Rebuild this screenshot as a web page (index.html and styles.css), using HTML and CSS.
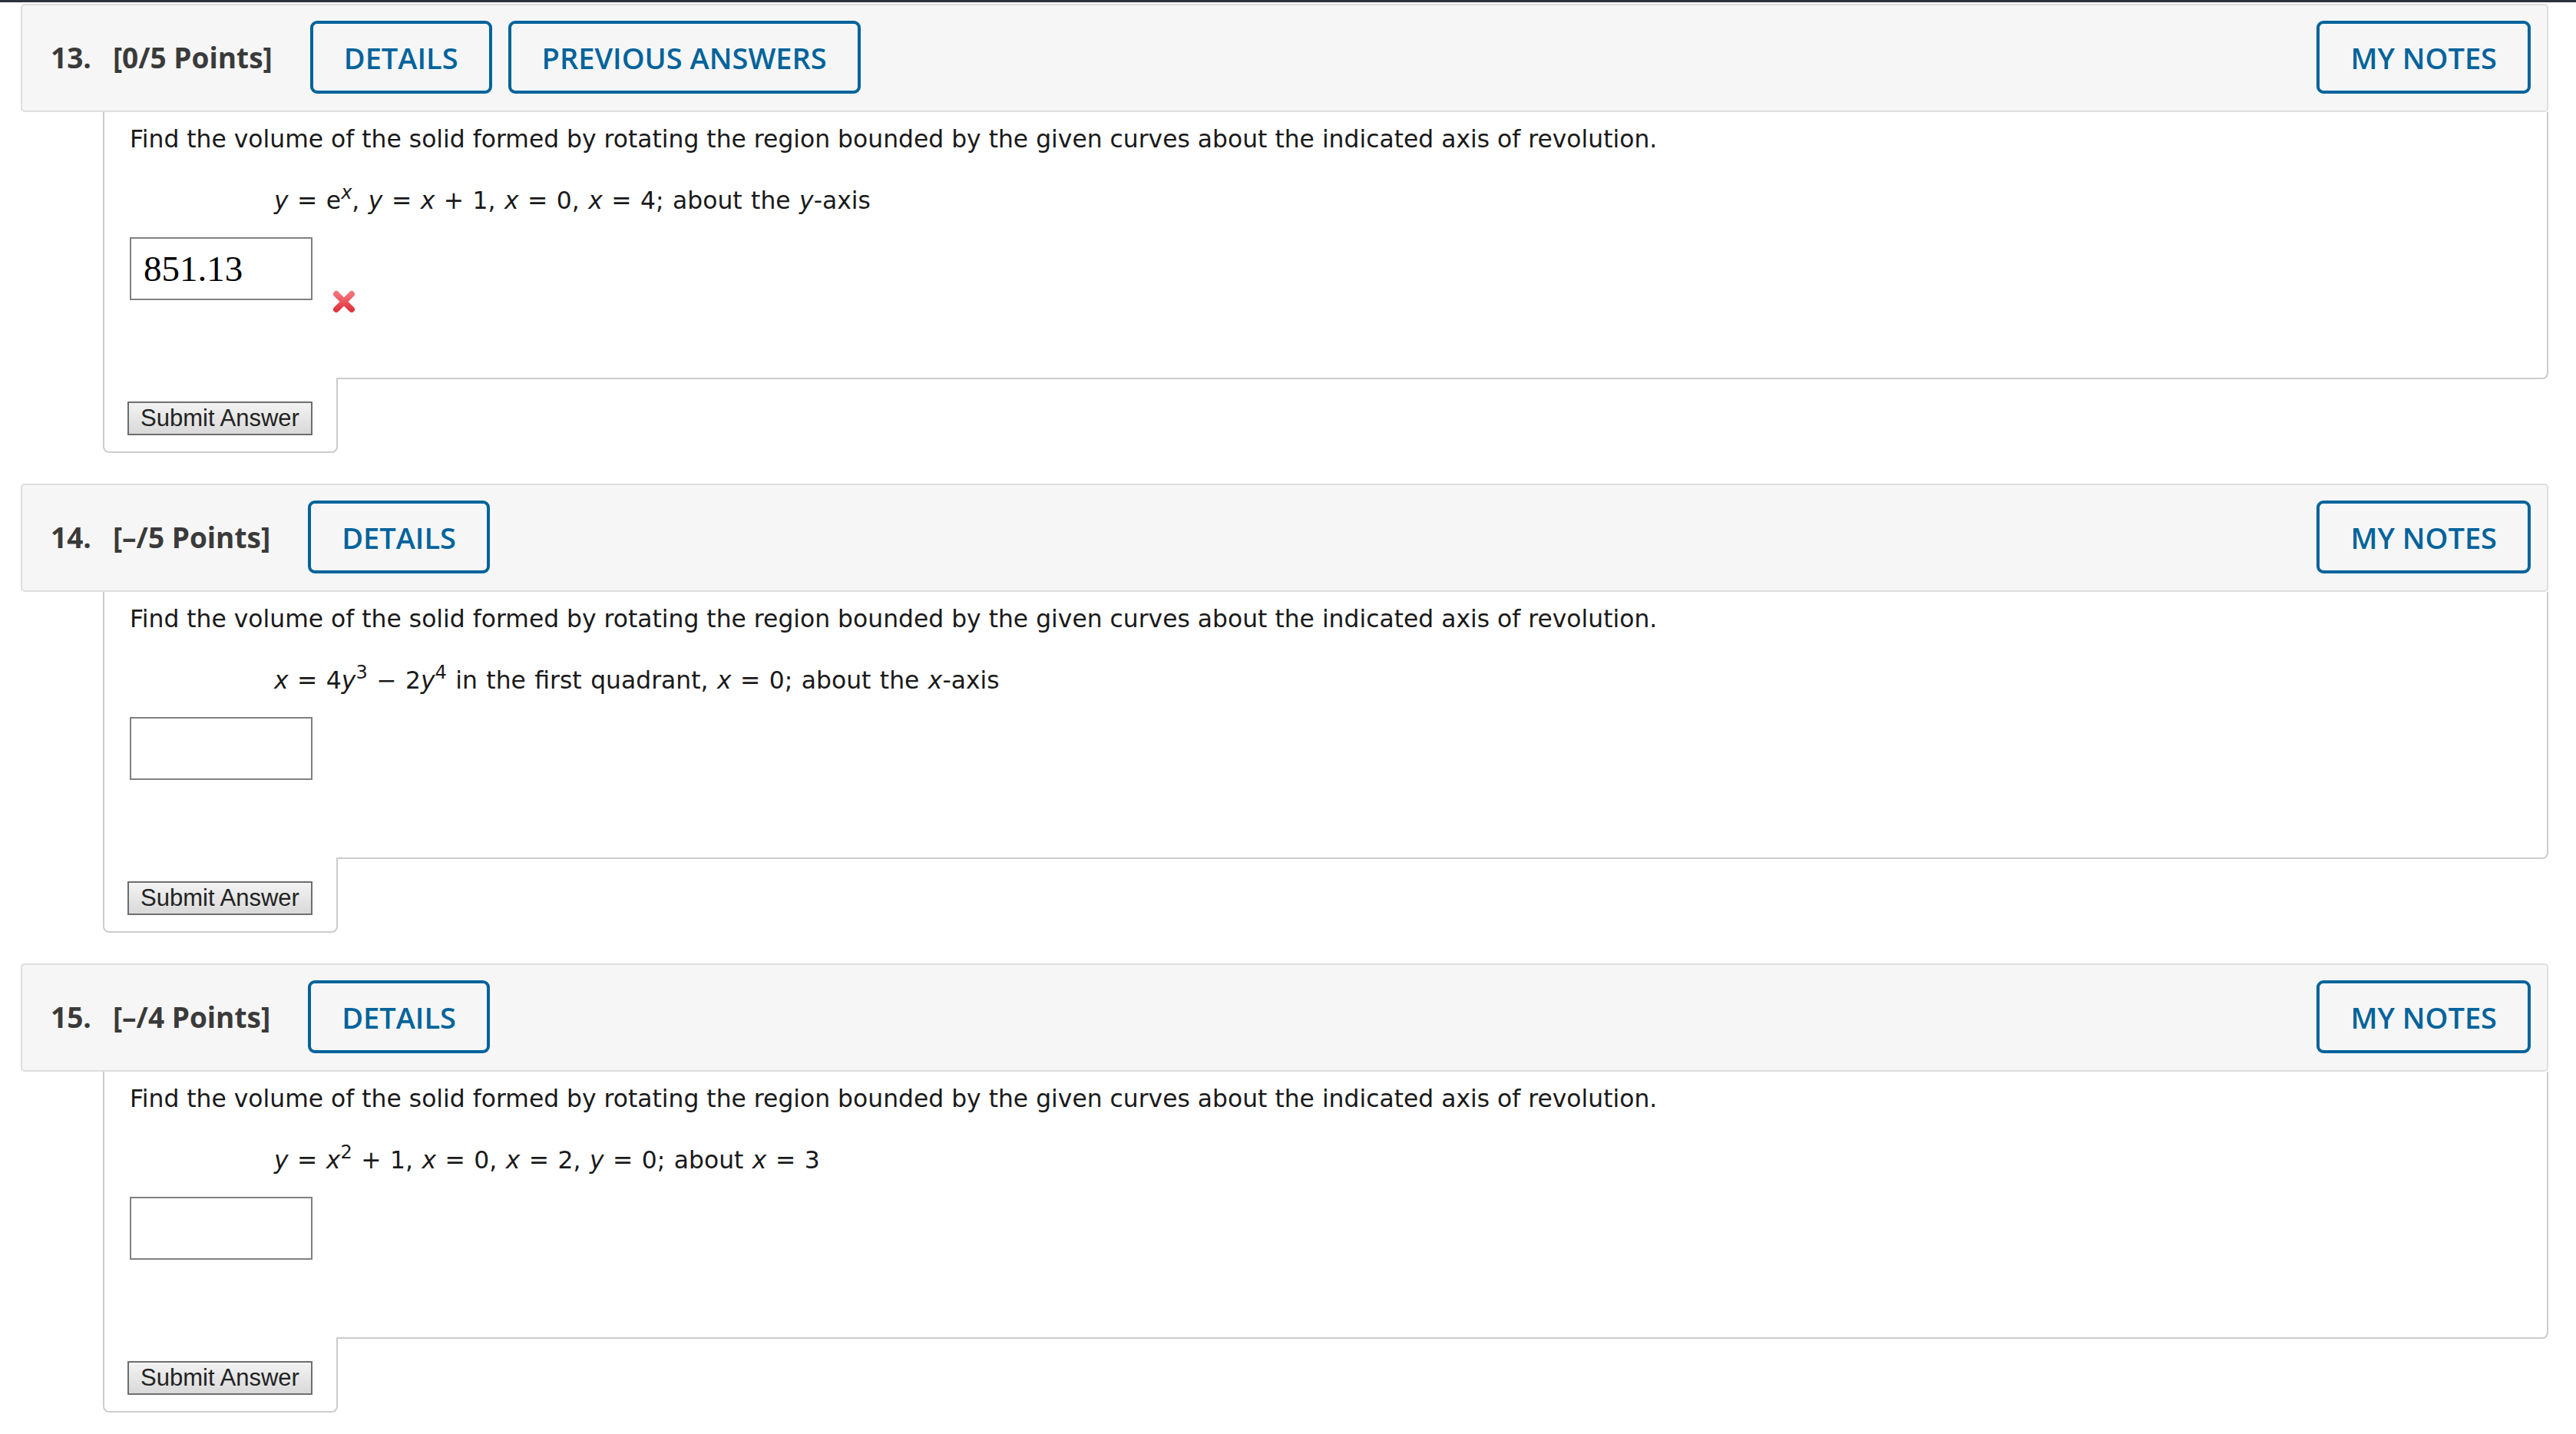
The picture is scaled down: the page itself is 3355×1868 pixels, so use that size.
FILE: index.html
```html
<!DOCTYPE html>
<html lang="en">
<head>
<meta charset="utf-8">
<title>Questions</title>
<link rel="stylesheet" href="styles.css">
</head>
<body>
<div class="topbar"></div>
<main class="page">

  <section class="question">
    <header class="q-header">
      <div class="q-label"><span class="q-num">13.</span><span class="q-pts">[0/5 Points]</span></div>
      <button class="hbtn">DETAILS</button>
      <button class="hbtn">PREVIOUS ANSWERS</button>
      <button class="hbtn notes">MY NOTES</button>
    </header>
    <div class="q-body">
      <p class="prompt">Find the volume of the solid formed by rotating the region bounded by the given curves about the indicated axis of revolution.</p>
      <p class="eq"><i>y</i> = e<sup><i>x</i></sup>, <i>y</i> = <i>x</i> + 1, <i>x</i> = 0, <i>x</i> = 4; about the <i>y</i>-axis</p>
      <div class="answer-row">
        <input class="answer" type="text" value="851.13">
        <svg class="wrong" viewBox="0 0 32 32" width="32" height="32" aria-label="incorrect">
          <defs>
            <linearGradient id="xg" x1="0" y1="0" x2="0" y2="1">
              <stop offset="0" stop-color="#f3727a"/>
              <stop offset="1" stop-color="#e2363f"/>
            </linearGradient>
          </defs>
          <path d="M6 6 L26 26 M26 6 L6 26" stroke="url(#xg)" stroke-width="8" stroke-linecap="round" fill="none"/>
        </svg>
      </div>
    </div>
    <div class="submit-tab"><button class="submit">Submit Answer</button></div>
  </section>

  <section class="question">
    <header class="q-header">
      <div class="q-label"><span class="q-num">14.</span><span class="q-pts">[–/5 Points]</span></div>
      <button class="hbtn">DETAILS</button>
      <button class="hbtn notes">MY NOTES</button>
    </header>
    <div class="q-body">
      <p class="prompt">Find the volume of the solid formed by rotating the region bounded by the given curves about the indicated axis of revolution.</p>
      <p class="eq"><i>x</i> = 4<i>y</i><sup>3</sup> − 2<i>y</i><sup>4</sup> in the first quadrant, <i>x</i> = 0; about the <i>x</i>-axis</p>
      <div class="answer-row">
        <input class="answer" type="text" value="">
      </div>
    </div>
    <div class="submit-tab"><button class="submit">Submit Answer</button></div>
  </section>

  <section class="question">
    <header class="q-header">
      <div class="q-label"><span class="q-num">15.</span><span class="q-pts">[–/4 Points]</span></div>
      <button class="hbtn">DETAILS</button>
      <button class="hbtn notes">MY NOTES</button>
    </header>
    <div class="q-body">
      <p class="prompt">Find the volume of the solid formed by rotating the region bounded by the given curves about the indicated axis of revolution.</p>
      <p class="eq"><i>y</i> = <i>x</i><sup>2</sup> + 1, <i>x</i> = 0, <i>x</i> = 2, <i>y</i> = 0; about <i>x</i> = 3</p>
      <div class="answer-row">
        <input class="answer" type="text" value="">
      </div>
    </div>
    <div class="submit-tab"><button class="submit">Submit Answer</button></div>
  </section>

</main>
</body>
</html>
```

FILE: styles.css
```css
* { box-sizing: border-box; }

html, body {
  margin: 0;
  padding: 0;
  background: #ffffff;
}

body {
  font-family: "DejaVu Sans", Verdana, sans-serif;
  color: #1a1a1a;
}

.topbar {
  height: 3px;
  background: #2d313c;
}

.page {
  padding: 2px 36px 0 27px;
}

.question {
  margin-bottom: 40px;
}

.q-header {
  display: flex;
  align-items: center;
  background: #f6f6f6;
  border: 2px solid #dedede;
  border-radius: 5px;
  padding: 20px 21px 22px 37px;
  font-family: "Open Sans", sans-serif;
}

.q-label {
  font-family: "Open Sans", sans-serif;
  font-weight: 700;
  font-size: 37px;
  color: #3a3a3a;
  margin-right: 49px;
  white-space: nowrap;
}

.q-pts {
  margin-left: 28px;
}

.hbtn {
  height: 95px;
  border: 4px solid #00639b;
  border-radius: 9px;
  background: transparent;
  color: #00639b;
  font-family: "Open Sans", sans-serif;
  font-weight: 600;
  font-size: 38px;
  padding: 0 40px;
  margin-right: 21px;
  cursor: pointer;
  white-space: nowrap;
}

.hbtn.notes {
  margin-left: auto;
  margin-right: 0;
}

.q-body {
  margin-left: 107px;
  border: 2px solid #cccccc;
  border-top: 0;
  border-radius: 0 0 8px 0;
  padding: 17px 33px 101px 33px;
  font-size: 31.4px;
  line-height: 36px;
}

.prompt {
  margin: 0;
}

.eq {
  margin: 44px 0 0 188px;
  word-spacing: 1.5px;
}

.eq sup {
  font-size: 24px;
  line-height: 0;
  vertical-align: 13px;
}

.answer-row {
  display: flex;
  align-items: flex-start;
  height: 82px;
  margin-top: 30px;
}

.answer {
  width: 238px;
  height: 82px;
  border: 2px solid #808080;
  padding: 0 0 0 16px;
  font-family: "Liberation Serif", serif;
  font-size: 47px;
  color: #000;
  background: #fff;
  outline: none;
}

.wrong {
  margin: 68px 0 0 25px;
  flex: none;
}

.submit-tab {
  position: relative;
  margin: -2px 0 0 107px;
  width: 306px;
  background: #ffffff;
  border: 2px solid #cccccc;
  border-top: 0;
  border-radius: 0 0 8px 8px;
  padding: 31px 0 21px 30px;
}

.submit {
  display: block;
  height: 44px;
  width: 241px;
  border: 2px solid #6e6e6e;
  background: linear-gradient(#f3f3f3, #d9d9d9);
  font-family: "Liberation Sans", Arial, sans-serif;
  font-size: 31px;
  color: #222;
  padding: 0;
  cursor: pointer;
}
```
